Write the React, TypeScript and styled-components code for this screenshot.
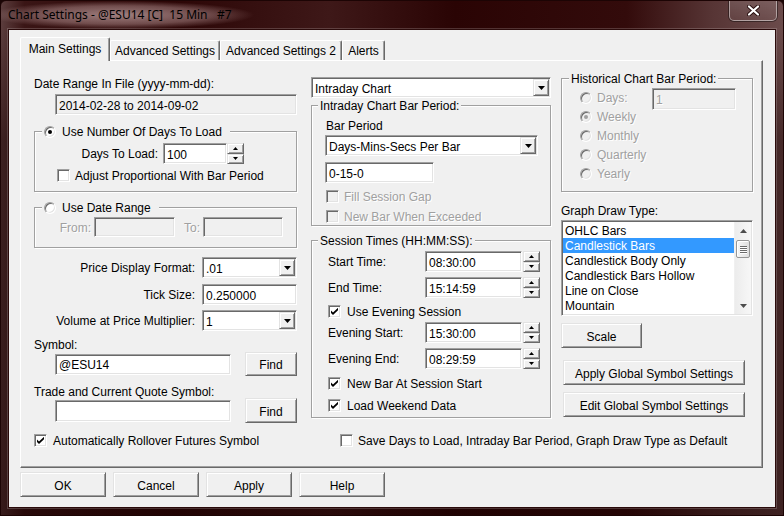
import React from "react";
import styled, { createGlobalStyle, css } from "styled-components";

const FONT = `"Liberation Sans", Arial, sans-serif`;

const GlobalStyle = createGlobalStyle`
  html, body { margin: 0; padding: 0; background: #1a0505; }
  body { font-family: ${FONT}; font-size: 12px; color: #000; }
  *, *::before, *::after { box-sizing: border-box; }
`;

const raised = css`
  background: #f0f0f0;
  border: 1px solid;
  border-color: #e3e3e3 #696969 #696969 #e3e3e3;
  box-shadow: inset 1px 1px 0 #fff, inset -1px -1px 0 #a0a0a0;
`;

const sunken = css`
  border: 1px solid;
  border-color: #a0a0a0 #fff #fff #a0a0a0;
  box-shadow: inset 1px 1px 0 #696969, inset -1px -1px 0 #e3e3e3;
`;

/* ---------- window frame ---------- */
const Window = styled.div`
  width: 784px;
  height: 516px;
  display: flex;
  flex-direction: column;
  border: 1px solid #1c0404;
  border-radius: 6px 6px 0 0;
  overflow: hidden;
  background:
    linear-gradient(180deg, rgba(0, 0, 0, 0) 0px, rgba(0, 0, 0, 0) 30px, rgba(25, 0, 0, 0.45) 140px, rgba(25, 0, 0, 0.55) 100%),
    linear-gradient(90deg, #5b3d3d 0%, #3a1515 3%, #2c0606 22%, #3e1818 42%, #2a0404 58%, #330b0b 80%, #573535 91%, #6b4b4b 100%);
`;

const TitleBar = styled.div`
  height: 28px;
  display: flex;
  align-items: flex-start;
  flex: none;
`;

const TitleText = styled.div`
  margin: 0 0 0 -13px;
  padding: 6px 22px 6px 20px;
  font-family: "Noto Sans", "Open Sans", sans-serif;
  font-size: 12px;
  line-height: 16px;
  white-space: pre;
  color: #000;
  background: radial-gradient(ellipse closest-side at 50% 50%, rgba(205, 175, 175, 0.7), rgba(190, 155, 155, 0.45) 65%, rgba(190, 155, 155, 0) 100%);
`;

const CloseButton = styled.div`
  margin-left: auto;
  margin-right: 6px;
  width: 48px;
  height: 20px;
  border: 1px solid rgba(255, 255, 255, 0.45);
  border-top: none;
  border-radius: 0 0 5px 5px;
  background: linear-gradient(180deg, rgba(255, 255, 255, 0.12), rgba(255, 255, 255, 0.04));
  box-shadow: 0 0 0 1px rgba(0, 0, 0, 0.4);
  display: flex;
  align-items: center;
  justify-content: center;
`;

const Client = styled.div`
  flex: 1;
  margin: 0 7px 7px;
  background: #f0f0f0;
  border: 1px solid #2a0a0a;
  box-shadow: 0 0 0 1px rgba(255, 255, 255, 0.18);
  padding: 7px 0 0 11px;
  display: flex;
  flex-direction: column;
`;

/* ---------- tabs ---------- */
const TabStrip = styled.div`
  height: 23px;
  display: flex;
  align-items: flex-end;
  flex: none;
  position: relative;
  z-index: 1;
`;

const Tab = styled.div<{ $w: number; $active?: boolean }>`
  width: ${(p) => p.$w}px;
  height: ${(p) => (p.$active ? 24 : 20)}px;
  margin-bottom: ${(p) => (p.$active ? -1 : 0)}px;
  flex: none;
  background: #f0f0f0;
  border-left: 1px solid #fff;
  border-top: 1px solid #fff;
  border-right: 1px solid #696969;
  box-shadow: inset -1px 0 0 #a0a0a0;
  border-radius: 2px 2px 0 0;
  display: flex;
  justify-content: center;
  padding-top: ${(p) => (p.$active ? 5 : 4)}px;
  line-height: 13px;
  white-space: nowrap;
`;

const Panel = styled.div`
  width: 743px;
  height: 408px;
  flex: none;
  border: 1px solid;
  border-color: #fff #696969 #696969 #fff;
  box-shadow: inset -1px -1px 0 #a0a0a0;
  padding-left: 13px;
  display: flex;
  flex-direction: column;
`;

const Columns = styled.div`
  display: flex;
  align-items: flex-start;
  flex: none;
`;

const Col = styled.div<{ $w: number; $ml?: number }>`
  width: ${(p) => p.$w}px;
  margin-left: ${(p) => p.$ml ?? 0}px;
  display: flex;
  flex-direction: column;
  flex: none;
`;

/* ---------- text ---------- */
const Text = styled.div<{ $mt?: number; $ml?: number; $disabled?: boolean }>`
  margin-top: ${(p) => p.$mt ?? 0}px;
  margin-left: ${(p) => p.$ml ?? 0}px;
  height: 13px;
  padding-top: 1px;
  line-height: 13px;
  white-space: nowrap;
  flex: none;
  color: ${(p) => (p.$disabled ? "#a0a0a0" : "#000")};
  text-shadow: ${(p) => (p.$disabled ? "1px 1px 0 #fff" : "none")};
`;

const FormLabel = styled.div<{ $w: number; $right?: boolean; $disabled?: boolean }>`
  width: ${(p) => p.$w}px;
  flex: none;
  text-align: ${(p) => (p.$right ? "right" : "left")};
  white-space: nowrap;
  line-height: 13px;
  padding-top: 2px;
  color: ${(p) => (p.$disabled ? "#a0a0a0" : "#000")};
  text-shadow: ${(p) => (p.$disabled ? "1px 1px 0 #fff" : "none")};
`;

const Row = styled.div<{ $mt?: number; $ml?: number; $h: number; $gap?: number }>`
  display: flex;
  align-items: center;
  flex: none;
  margin-top: ${(p) => p.$mt ?? 0}px;
  margin-left: ${(p) => p.$ml ?? 0}px;
  height: ${(p) => p.$h}px;
  gap: ${(p) => p.$gap ?? 0}px;
`;

/* ---------- controls ---------- */
const Field = styled.div<{ $w: number; $h: number; $mt?: number; $ml?: number; $bg?: string; $disabled?: boolean }>`
  ${sunken};
  width: ${(p) => p.$w}px;
  height: ${(p) => p.$h}px;
  margin-top: ${(p) => p.$mt ?? 0}px;
  margin-left: ${(p) => p.$ml ?? 0}px;
  flex: none;
  background: ${(p) => p.$bg ?? "#fff"};
  padding: 2px 0 0 3px;
  display: flex;
  align-items: center;
  white-space: nowrap;
  overflow: hidden;
  color: ${(p) => (p.$disabled ? "#a0a0a0" : "#000")};
  text-shadow: ${(p) => (p.$disabled ? "1px 1px 0 #fff" : "none")};
`;

const ComboBox = styled.div<{ $w: number; $h: number; $mt?: number; $ml?: number }>`
  ${sunken};
  width: ${(p) => p.$w}px;
  height: ${(p) => p.$h}px;
  margin-top: ${(p) => p.$mt ?? 0}px;
  margin-left: ${(p) => p.$ml ?? 0}px;
  flex: none;
  background: #fff;
  display: flex;
  align-items: stretch;
  padding: 1px;
`;

const ComboValue = styled.div`
  flex: 1;
  display: flex;
  align-items: center;
  padding: 2px 0 0 2px;
  white-space: nowrap;
`;

const ComboArrow = styled.div`
  ${raised};
  width: 16px;
  flex: none;
  display: flex;
  align-items: center;
  justify-content: center;
`;

const SpinBox = styled.div<{ $h: number }>`
  width: 17px;
  height: ${(p) => p.$h}px;
  flex: none;
  display: flex;
  flex-direction: column;
`;

const SpinBtn = styled.div`
  ${raised};
  flex: 1;
  display: flex;
  align-items: center;
  justify-content: center;
`;

const Button = styled.div<{ $w: number; $h: number; $mt?: number; $ml?: number }>`
  ${raised};
  width: ${(p) => p.$w}px;
  height: ${(p) => p.$h}px;
  margin-top: ${(p) => p.$mt ?? 0}px;
  margin-left: ${(p) => p.$ml ?? 0}px;
  flex: none;
  display: flex;
  align-items: center;
  justify-content: center;
  white-space: nowrap;
  padding-top: 2px;
`;

const CheckBox = styled.span<{ $disabled?: boolean }>`
  ${sunken};
  width: 13px;
  height: 13px;
  flex: none;
  background: ${(p) => (p.$disabled ? "#f0f0f0" : "#fff")};
  display: flex;
  align-items: center;
  justify-content: center;
`;

const RadioCircle = styled.span<{ $disabled?: boolean }>`
  ${sunken};
  width: 12px;
  height: 12px;
  border-radius: 50%;
  flex: none;
  background: ${(p) => (p.$disabled ? "#f0f0f0" : "#fff")};
  display: flex;
  align-items: center;
  justify-content: center;
`;

const RadioDot = styled.span<{ $disabled?: boolean }>`
  width: 4px;
  height: 4px;
  border-radius: 50%;
  background: ${(p) => (p.$disabled ? "#a0a0a0" : "#000")};
`;

/* ---------- group box ---------- */
const Group = styled.div<{ $mt: number; $h: number }>`
  margin-top: ${(p) => p.$mt}px;
  height: ${(p) => p.$h}px;
  flex: none;
  border: 1px solid #a0a0a0;
  box-shadow: inset 1px 1px 0 #fff, 1px 1px 0 #fff;
  display: flex;
  flex-direction: column;
`;

const Legend = styled.div<{ $ml: number; $pr?: number }>`
  margin-top: -7px;
  margin-left: ${(p) => p.$ml}px;
  align-self: flex-start;
  padding: 1px ${(p) => p.$pr ?? 2}px 0 2px;
  height: 13px;
  line-height: 13px;
  background: #f0f0f0;
  display: flex;
  align-items: center;
  gap: 6px;
  white-space: nowrap;
  flex: none;
`;

/* ---------- list box ---------- */
const ListBox = styled.div`
  ${sunken};
  margin-top: 3px;
  width: 192px;
  height: 96px;
  flex: none;
  background: #fff;
  display: flex;
  padding: 1px;
`;

const ListItems = styled.div`
  flex: 1;
  display: flex;
  flex-direction: column;
  padding-top: 1px;
`;

const ListItem = styled.div<{ $selected?: boolean }>`
  height: 15px;
  line-height: 16px;
  padding-left: 2px;
  white-space: nowrap;
  background: ${(p) => (p.$selected ? "#3399ff" : "transparent")};
  color: ${(p) => (p.$selected ? "#fff" : "#000")};
`;

const ScrollBar = styled.div`
  width: 17px;
  flex: none;
  display: flex;
  flex-direction: column;
  background: linear-gradient(90deg, #ececec, #f7f7f7);
  border-left: 1px solid #f0f0f0;
`;

const ScrollArrow = styled.div`
  height: 17px;
  flex: none;
  display: flex;
  align-items: center;
  justify-content: center;
`;

const Thumb = styled.div`
  height: 18px;
  margin: 1px 1px 0;
  flex: none;
  border: 1px solid #969696;
  border-radius: 2px;
  background: linear-gradient(90deg, #f6f6f6, #dedede);
  box-shadow: inset 1px 1px 0 #fff;
  display: flex;
  flex-direction: column;
  align-items: center;
  justify-content: center;
  gap: 1px;
`;

const Grip = styled.span`
  width: 7px;
  height: 1px;
  background: #6a6a6a;
  box-shadow: 0 1px 0 #fff;
`;

const Spacer = styled.div`
  flex: 1;
`;

/* ---------- bottom ---------- */
const BottomRow = styled.div`
  margin-top: 11px;
  height: 13px;
  display: flex;
  align-items: center;
  flex: none;
`;

const CheckItem = styled.div<{ $w?: number }>`
  width: ${(p) => (p.$w ? `${p.$w}px` : "auto")};
  display: flex;
  align-items: center;
  gap: 5px;
  white-space: nowrap;
  flex: none;
`;

const ButtonRow = styled.div`
  margin-top: 4px;
  display: flex;
  gap: 7px;
  flex: none;
`;

const RadioList = styled.div`
  width: 72px;
  display: flex;
  flex-direction: column;
  flex: none;
`;

/* ---------- small drawings ---------- */
const DownTri = ({ size = 7, color = "#000" }: { size?: number; color?: string }) => (
  <svg width={size} height={Math.ceil(size / 2)} viewBox={`0 0 ${size} ${Math.ceil(size / 2)}`}>
    <polygon points={`0,0 ${size},0 ${size / 2},${Math.ceil(size / 2)}`} fill={color} />
  </svg>
);

const UpTri = ({ size = 7, color = "#000" }: { size?: number; color?: string }) => (
  <svg width={size} height={Math.ceil(size / 2)} viewBox={`0 0 ${size} ${Math.ceil(size / 2)}`}>
    <polygon points={`0,${Math.ceil(size / 2)} ${size},${Math.ceil(size / 2)} ${size / 2},0`} fill={color} />
  </svg>
);

const CheckMark = () => (
  <svg width="7" height="7" viewBox="0 0 7 7">
    <polygon points="0,2.5 2,4.5 7,-0.2 7,2.3 2,7 0,5" fill="#000" />
  </svg>
);

const Check = ({ checked, disabled, label, gap = 5 }: { checked?: boolean; disabled?: boolean; label: string; gap?: number }) => (
  <CheckItem style={{ gap }}>
    <CheckBox $disabled={disabled}>{checked && <CheckMark />}</CheckBox>
    <FormLabel $w={0} style={{ width: "auto" }} $disabled={disabled}>
      {label}
    </FormLabel>
  </CheckItem>
);

const Radio = ({ checked, disabled }: { checked?: boolean; disabled?: boolean }) => (
  <RadioCircle $disabled={disabled}>{checked && <RadioDot $disabled={disabled} />}</RadioCircle>
);

const Spin = ({ h }: { h: number }) => (
  <SpinBox $h={h}>
    <SpinBtn>
      <UpTri size={5} />
    </SpinBtn>
    <SpinBtn>
      <DownTri size={5} />
    </SpinBtn>
  </SpinBox>
);

const Combo = ({ w, h, mt, ml, value }: { w: number; h: number; mt?: number; ml?: number; value: string }) => (
  <ComboBox $w={w} $h={h} $mt={mt} $ml={ml}>
    <ComboValue>{value}</ComboValue>
    <ComboArrow>
      <DownTri size={7} />
    </ComboArrow>
  </ComboBox>
);

const TimeRow = ({ label, value, mt }: { label: string; value: string; mt: number }) => (
  <Row $mt={mt} $ml={16} $h={21} $gap={0}>
    <FormLabel $w={97}>{label}</FormLabel>
    <Field $w={97} $h={21}>{value}</Field>
    <Spacer style={{ flex: "none", width: 1 }} />
    <Spin h={21} />
  </Row>
);

const CloseGlyph = () => (
  <svg width="13" height="11" viewBox="0 0 13 11">
    <path d="M2 1.5 L11 9.5 M11 1.5 L2 9.5" stroke="#2a1010" strokeWidth="4" strokeLinecap="round" />
    <path d="M2 1.5 L11 9.5 M11 1.5 L2 9.5" stroke="#fff" strokeWidth="2.2" strokeLinecap="round" />
  </svg>
);

export default function App() {
  return (
    <>
      <GlobalStyle />
      <Window>
        <TitleBar>
          <TitleText>{"Chart Settings - @ESU14 [C]  15 Min   #7"}</TitleText>
          <CloseButton>
            <CloseGlyph />
          </CloseButton>
        </TitleBar>
        <Client>
          <TabStrip>
            <Tab $w={90} $active>Main Settings</Tab>
            <Tab $w={110}>Advanced Settings</Tab>
            <Tab $w={122}>Advanced Settings 2</Tab>
            <Tab $w={43}>Alerts</Tab>
          </TabStrip>
          <Panel>
            <Columns>
              {/* left column */}
              <Col $w={263}>
                <Text $mt={16}>Date Range In File (yyyy-mm-dd):</Text>
                <Field $mt={4} $ml={21} $w={242} $h={21} $bg="#f0f0f0">
                  2014-02-28 to 2014-09-02
                </Field>
                <Group $mt={16} $h={61}>
                  <Legend $ml={7} $pr={8}>
                    <Radio checked />
                    <span>Use Number Of Days To Load</span>
                  </Legend>
                  <Row $mt={5} $h={21} $gap={0}>
                    <FormLabel $w={123} $right>
                      Days To Load:
                    </FormLabel>
                    <Spacer style={{ flex: "none", width: 5 }} />
                    <Field $w={64} $h={21}>100</Field>
                    <Spin h={21} />
                  </Row>
                  <Row $mt={5} $ml={22} $h={13}>
                    <Check label="Adjust Proportional With Bar Period" />
                  </Row>
                </Group>
                <Group $mt={15} $h={41}>
                  <Legend $ml={7} $pr={8}>
                    <Radio />
                    <span>Use Date Range</span>
                  </Legend>
                  <Row $mt={3} $h={20}>
                    <FormLabel $w={56} $right $disabled>
                      From:
                    </FormLabel>
                    <Field $ml={3} $w={81} $h={20} $bg="#f0f0f0" />
                    <FormLabel $w={25} $right $disabled>
                      To:
                    </FormLabel>
                    <Field $ml={3} $w={80} $h={20} $bg="#f0f0f0" />
                  </Row>
                </Group>
                <Row $mt={9} $h={21} $gap={7}>
                  <FormLabel $w={161} $right>
                    Price Display Format:
                  </FormLabel>
                  <Combo w={95} h={21} value=".01" />
                </Row>
                <Row $mt={6} $h={21} $gap={7}>
                  <FormLabel $w={161} $right>
                    Tick Size:
                  </FormLabel>
                  <Field $w={95} $h={21}>0.250000</Field>
                </Row>
                <Row $mt={5} $h={21} $gap={7}>
                  <FormLabel $w={161} $right>
                    Volume at Price Multiplier:
                  </FormLabel>
                  <Combo w={95} h={21} value="1" />
                </Row>
                <Text $mt={7}>Symbol:</Text>
                <Row $mt={1} $ml={21} $h={24} $gap={14}>
                  <Field $w={176} $h={21}>@ESU14</Field>
                  <Button $w={52} $h={24}>Find</Button>
                </Row>
                <Text $mt={9}>Trade and Current Quote Symbol:</Text>
                <Row $mt={0} $ml={21} $h={25} $gap={14}>
                  <Field $w={176} $h={22} />
                  <Button $w={52} $h={25}>Find</Button>
                </Row>
              </Col>

              {/* middle column */}
              <Col $w={240} $ml={14}>
                <Combo mt={16} w={240} h={21} value="Intraday Chart" />
                <Group $mt={7} $h={121}>
                  <Legend $ml={6}>Intraday Chart Bar Period:</Legend>
                  <Text $mt={7} $ml={14}>Bar Period</Text>
                  <Combo mt={3} ml={13} w={213} h={21} value="Days-Mins-Secs Per Bar" />
                  <Field $mt={6} $ml={13} $w={109} $h={21}>0-15-0</Field>
                  <Row $mt={7} $ml={14} $h={13}>
                    <Check disabled label="Fill Session Gap" />
                  </Row>
                  <Row $mt={7} $ml={14} $h={13}>
                    <Check disabled label="New Bar When Exceeded" />
                  </Row>
                </Group>
                <Group $mt={14} $h={178}>
                  <Legend $ml={6}>Session Times (HH:MM:SS):</Legend>
                  <TimeRow mt={4} label="Start Time:" value="08:30:00" />
                  <TimeRow mt={5} label="End Time:" value="15:14:59" />
                  <Row $mt={7} $ml={16} $h={13}>
                    <Check checked label="Use Evening Session" gap={6} />
                  </Row>
                  <TimeRow mt={4} label="Evening Start:" value="15:30:00" />
                  <TimeRow mt={5} label="Evening End:" value="08:29:59" />
                  <Row $mt={8} $ml={16} $h={13}>
                    <Check checked label="New Bar At Session Start" gap={6} />
                  </Row>
                  <Row $mt={9} $ml={16} $h={13}>
                    <Check checked label="Load Weekend Data" gap={6} />
                  </Row>
                </Group>
              </Col>

              {/* right column */}
              <Col $w={192} $ml={10}>
                <Group $mt={17} $h={114}>
                  <Legend $ml={7}>Historical Chart Bar Period:</Legend>
                  <Row $mt={3} $ml={18} $h={95} style={{ alignItems: "flex-start" }}>
                    <RadioList>
                      {["Days:", "Weekly", "Monthly", "Quarterly", "Yearly"].map((l) => (
                        <Row key={l} $h={19} $gap={5}>
                          <Radio disabled checked={l === "Weekly"} />
                          <FormLabel $w={50} $disabled>
                            {l}
                          </FormLabel>
                        </Row>
                      ))}
                    </RadioList>
                    <Field $w={84} $h={22} $bg="#f0f0f0" $disabled>
                      1
                    </Field>
                  </Row>
                </Group>
                <Text $mt={12}>Graph Draw Type:</Text>
                <ListBox>
                  <ListItems>
                    <ListItem>OHLC Bars</ListItem>
                    <ListItem $selected>Candlestick Bars</ListItem>
                    <ListItem>Candlestick Body Only</ListItem>
                    <ListItem>Candlestick Bars Hollow</ListItem>
                    <ListItem>Line on Close</ListItem>
                    <ListItem>Mountain</ListItem>
                  </ListItems>
                  <ScrollBar>
                    <ScrollArrow>
                      <UpTri size={7} color="#4d4d4d" />
                    </ScrollArrow>
                    <Thumb>
                      <Grip />
                      <Grip />
                      <Grip />
                      <Grip />
                    </Thumb>
                    <Spacer />
                    <ScrollArrow>
                      <DownTri size={7} color="#4d4d4d" />
                    </ScrollArrow>
                  </ScrollBar>
                </ListBox>
                <Button $mt={7} $w={81} $h={25}>Scale</Button>
                <Button $mt={12} $ml={2} $w={182} $h={25}>Apply Global Symbol Settings</Button>
                <Button $mt={7} $ml={2} $w={182} $h={25}>Edit Global Symbol Settings</Button>
              </Col>
            </Columns>
            <BottomRow>
              <CheckItem $w={306}>
                <Check checked label="Automatically Rollover Futures Symbol" gap={6} />
              </CheckItem>
              <Check label="Save Days to Load, Intraday Bar Period, Graph Draw Type as Default" />
            </BottomRow>
          </Panel>
          <ButtonRow>
            <Button $w={86} $h={25}>OK</Button>
            <Button $w={86} $h={25}>Cancel</Button>
            <Button $w={86} $h={25}>Apply</Button>
            <Button $w={86} $h={25}>Help</Button>
          </ButtonRow>
        </Client>
      </Window>
    </>
  );
}
